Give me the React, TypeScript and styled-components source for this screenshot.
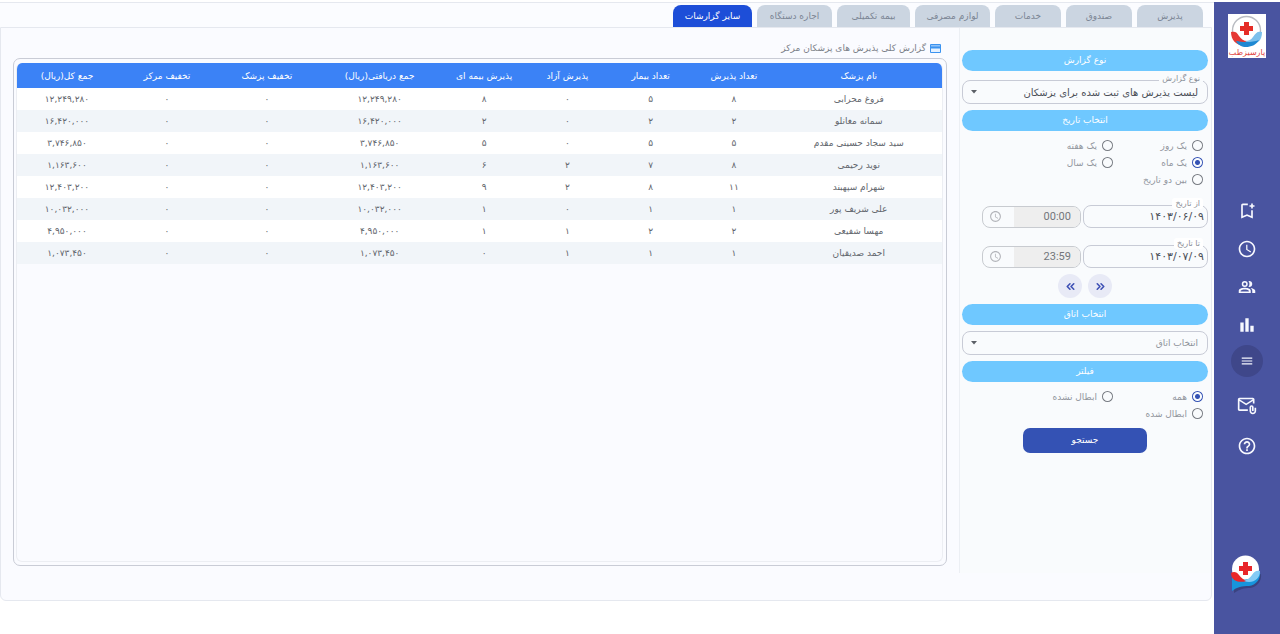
import React, { useState } from "react";
import styled, { createGlobalStyle, css } from "styled-components";
import {
  MdOutlineBookmarkAdd,
  MdAccessTime,
  MdBarChart,
  MdMenu,
  MdOutlineAttachEmail,
  MdHelpOutline,
} from "react-icons/md";
import { ChevronsLeft, ChevronsRight } from "lucide-react";

const GlobalStyle = createGlobalStyle`
  * { box-sizing: border-box; }
  body {
    margin: 0;
    background: #ffffff;
    font-family: "DejaVu Sans", "Liberation Sans", sans-serif;
    font-size: 9px;
    color: #6b7280;
  }
  button, input, select { font: inherit; color: inherit; margin: 0; }
`;

const Page = styled.div`
  display: flex;
  min-height: 100vh;
  padding-top: 2px;
`;

const Sidebar = styled.aside`
  flex: 0 0 66px;
  display: flex;
  flex-direction: column;
  align-items: center;
  padding: 12px 0 40px;
  background: #4954a0;
`;

const Brand = styled.a`
  display: block;
  width: 38px;
  height: 44px;
  background: #ffffff;
`;

const Nav = styled.nav`
  display: flex;
  flex-direction: column;
  align-items: center;
  margin-top: 134px;
`;

const NavButton = styled.button<{ $size?: number }>`
  display: flex;
  align-items: center;
  justify-content: center;
  width: 38px;
  height: ${(p) => p.$size ?? 38}px;
  padding: 0;
  border: 0;
  background: none;
  color: #f8f9ff;
`;

const MenuButton = styled(NavButton)`
  width: 32px;
  height: 32px;
  margin: 1px 0 9px;
  border-radius: 50%;
  background: #3f478a;
`;

const ChatButton = styled(NavButton)`
  margin-top: auto;
`;

const Main = styled.main`
  flex: 1;
  min-width: 0;
  padding-right: 2px;
  border-top: 1px solid #e5e8ef;
  background: #ffffff;
`;

const TabBar = styled.div`
  display: flex;
  gap: 5px;
  padding: 2px 9px 0;
  background: #fbfcff;
`;

const Tab = styled.button<{ $width: number; $active?: boolean }>`
  width: ${(p) => p.$width}px;
  height: 22px;
  padding: 0;
  border: 0;
  border-radius: 8px 8px 0 0;
  background: ${(p) => (p.$active ? "#1d4ed8" : "#cbd5e1")};
  color: ${(p) => (p.$active ? "#ffffff" : "#7b8594")};
  white-space: nowrap;
`;

const Board = styled.div`
  display: flex;
  align-items: stretch;
  padding-bottom: 27px;
  border: 1px solid #e5e8ef;
  border-radius: 0 0 6px 6px;
  background: #fafbff;
`;

const Filters = styled.form`
  flex: 0 0 252px;
  display: flex;
  flex-direction: column;
  min-height: 545px;
  padding: 22px 3px 0 2px;
  border-left: 1px solid #eceff4;
  background: #f9fbfd;
`;

const Heading = styled.h2`
  margin: 0;
  height: 21px;
  border-radius: 11px;
  background: #6fc8ff;
  color: #ffffff;
  font-size: 9px;
  font-weight: 400;
  line-height: 20px;
  text-align: center;
`;

const Field = styled.div<{ $gap?: number; $grow?: boolean }>`
  position: relative;
  ${(p) => p.$grow && css`flex: 1; min-width: 0;`}
  margin: ${(p) => (p.$gap ? `${p.$gap}px 0 6px` : 0)};
`;

const FloatLabel = styled.label<{ $bg?: string }>`
  position: absolute;
  top: -7px;
  right: 5px;
  padding: 0 3px;
  border-radius: 3px;
  background: ${(p) => p.$bg ?? "#f9fbfd"};
  color: #8b8f98;
  font-size: 8px;
  line-height: 11px;
`;

const Select = styled.select<{ $muted?: boolean }>`
  display: block;
  width: 100%;
  height: 24px;
  padding: 0 9px;
  appearance: none;
  border: 1px solid #c8cbd6;
  border-radius: 8px;
  background: transparent;
  color: ${(p) => (p.$muted ? "#8f939b" : "#4b5058")};
  font-size: ${(p) => (p.$muted ? 9 : 10)}px;
`;

const Caret = styled.svg`
  position: absolute;
  left: 9px;
  top: 10px;
  width: 6px;
  height: 4px;
  pointer-events: none;
`;

const Choices = styled.div<{ $bottom: number }>`
  display: grid;
  grid-template-columns: 90px 90px;
  grid-auto-rows: 17px;
  margin: 6px 5px ${(p) => p.$bottom}px;
`;

const Choice = styled.label`
  display: flex;
  align-items: center;
  gap: 5px;
  color: #92969d;
  white-space: nowrap;
`;

const Radio = styled.input`
  flex: none;
  width: 11px;
  height: 11px;
  appearance: none;
  border-radius: 50%;
  background: radial-gradient(circle, transparent 4px, #777b82 5px);
  &:checked {
    background: radial-gradient(circle, #3452b4 2px, transparent 3px, transparent 4px, #3452b4 5px);
  }
`;

const DateRow = styled.div`
  display: flex;
  align-items: center;
  gap: 2px;
  height: 23px;
  margin-bottom: 17px;
  padding-left: 20px;
`;

const DateInput = styled.input`
  display: block;
  width: 100%;
  height: 23px;
  padding: 0 3px;
  border: 1px solid #c8cbd6;
  border-radius: 8px;
  background: transparent;
  color: #4b5058;
  font-size: 11px;
`;

const TimeBox = styled.div`
  flex: 0 0 99px;
  display: flex;
  height: 22px;
  overflow: hidden;
  border: 1px solid #c8cbd0;
  border-radius: 8px;
`;

const TimeInput = styled.input`
  flex: 1;
  min-width: 0;
  padding: 0 9px;
  border: 0;
  background: #eeeeee;
  color: #73767b;
  font-family: Roboto, sans-serif;
  font-size: 11px;
`;

const TimeIcon = styled.span`
  flex: 0 0 31px;
  display: flex;
  align-items: center;
  justify-content: center;
  padding-left: 0;
  padding-right: 6px;
  color: #b3b5ba;
`;

const Pager = styled.div`
  display: flex;
  justify-content: center;
  gap: 6px;
  margin: -11px 0 6px;
`;

const RoundButton = styled.button`
  display: flex;
  align-items: center;
  justify-content: center;
  width: 24px;
  height: 24px;
  padding: 0;
  border: 0;
  border-radius: 50%;
  background: #e8eaf6;
  color: #3f51b5;
`;

const SearchButton = styled.button`
  align-self: center;
  width: 124px;
  height: 25px;
  padding: 0 0 2px;
  border: 0;
  border-radius: 7px;
  background: #3452b4;
  color: #ffffff;
`;

const Report = styled.section`
  flex: 1;
  min-width: 0;
  display: flex;
  flex-direction: column;
  padding: 11px 12px 7px;
`;

const ReportTitle = styled.h1`
  display: flex;
  align-items: center;
  gap: 4px;
  height: 18px;
  margin: 0;
  padding-right: 6px;
  color: #7b7f88;
  font-size: 9px;
  font-weight: 400;
`;

const Frame = styled.div`
  flex: 1;
  margin-top: 1px;
  padding: 4px 3px 3px 2px;
  border: 1px solid #c9ccd6;
  border-radius: 7px;
`;

const FrameInner = styled.div`
  height: 100%;
  overflow: hidden;
  border: 1px solid #eceef3;
  border-top: 0;
  border-radius: 6px;
`;

const Table = styled.table`
  width: 100%;
  table-layout: fixed;
  border-collapse: collapse;
  text-align: center;
`;

const Col = styled.col<{ $share: number }>`
  width: ${(p) => p.$share}%;
`;

const HeadCell = styled.th`
  height: 25px;
  padding: 0;
  background: #3b82f6;
  color: #ffffff;
  font-weight: 400;
  white-space: nowrap;
`;

const Row = styled.tr`
  background: #ffffff;
  &:nth-child(even) { background: #f1f5f9; }
`;

const Cell = styled.td`
  height: 22px;
  padding: 0;
  color: #62666d;
  white-space: nowrap;
`;

const BrandMark = () => (
  <svg width="38" height="44" viewBox="0 0 38 44" role="img" aria-label="پارسیزطب">
    <circle cx="18.500" cy="16.500" r="14" fill="#fff" stroke="#b9bcc2" strokeWidth="1.400" />
    <path d="M3 18c4-1 6 0 8 4 2 3 5 5 8 5l-3 5C8 31 3 26 3 18z" fill="#e53935" />
    <path d="M34 18c-5-1-6 1-9 5-2 3-5 4-8 4 4 3 9 3 13 1 3-2 4-6 4-10z" fill="#7cc0ec" />
    <path d="M8 27c6 1 15 2 23-1-3 5-8 7-13 7-4 0-8-2-10-6z" fill="#1e88d2" />
    <path d="M16 8h5v4h4v5h-4v4h-5v-4h-4v-5h4z" fill="#e52d27" />
    <text x="19" y="41" textAnchor="middle" fontSize="8" fill="#e0443f">پارسیزطب</text>
  </svg>
);

const ChatMark = () => (
  <svg width="38" height="40" viewBox="0 0 38 40" aria-hidden="true">
    <path d="M6 39V24l27-4c1 7-4 13-11 14-6 0-10 1-16 5z" fill="#2b3160" opacity="0.500" />
    <circle cx="17.500" cy="15" r="13.500" fill="#fff" />
    <path d="M4 37V22c7 5 18 6 28-4 1 7-4 13-11 14-7 0-12 1-17 5z" fill="#1795dc" />
    <path d="M3 19c3-2 6-1 8 2s5 5 8 6c-6 2-16 1-16-8z" fill="#e8262a" />
    <path d="M32 17c-4-1-6 1-8 4s-5 5-8 6c8 3 16-1 16-10z" fill="#84cbf5" />
    <path d="M15 8h5v4h4v5h-4v4h-5v-4h-4v-5h4z" fill="#e8262a" />
  </svg>
);

const PeopleIcon = () => (
  <svg width="18" height="18" viewBox="0 0 24 24" fill="currentColor" aria-hidden="true">
    <path
      fillRule="evenodd"
      d="M9 4a4 4 0 1 1 0 8 4 4 0 0 1 0-8zm0 2a2 2 0 1 0 0 4 2 2 0 0 0 0-4z"
    />
    <path d="M14 4c2.800-.5 5 1.300 5 4s-2.200 4.500-5 4c1.700-2.200 1.700-5.800 0-8z" />
    <path
      fillRule="evenodd"
      d="M1 20v-3c0-3 5-4 8-4s8 1 8 4v3zm2.500-2h11v-1c-1-1.200-3.500-1.700-5.500-1.700s-4.500.5-5.500 1.700z"
    />
    <path d="M16.500 13.200c3 .4 6.500 1.500 6.500 3.800v3h-4v-3c0-1.600-1-2.800-2.500-3.800z" />
  </svg>
);

const CardIcon = () => (
  <svg width="11" height="9" viewBox="0 0 11 9" aria-hidden="true">
    <rect width="11" height="9" rx="1" fill="#3b93f0" />
    <path d="M1 1.400h9v.8H1zM1 4.600h9V8H1z" fill="#e4f1ff" />
  </svg>
);

const Arrow = () => (
  <Caret viewBox="0 0 6 4" aria-hidden="true">
    <path d="M0 0h6L3 3.500z" fill="#5b5f66" />
  </Caret>
);

const tabs = [
  { label: "پذیرش", width: 66 },
  { label: "صندوق", width: 66 },
  { label: "خدمات", width: 66 },
  { label: "لوازم مصرفی", width: 75 },
  { label: "بیمه تکمیلی", width: 73 },
  { label: "اجاره دستگاه", width: 75 },
  { label: "سایر گزارشات", width: 79 },
];

const columns = [
  { label: "نام پزشک", share: 18 },
  { label: "تعداد پذیرش", share: 9 },
  { label: "تعداد بیمار", share: 9 },
  { label: "پذیرش آزاد", share: 9 },
  { label: "پذیرش بیمه ای", share: 9 },
  { label: "جمع دریافتی(ریال)", share: 13.6 },
  { label: "تخفیف پزشک", share: 10.8 },
  { label: "تخفیف مرکز", share: 10.8 },
  { label: "جمع کل(ریال)", share: 10.8 },
];

const rows = [
  ["فروغ محرابی", "۸", "۵", "۰", "۸", "۱۲,۲۴۹,۲۸۰", "۰", "۰", "۱۲,۲۴۹,۲۸۰"],
  ["سمانه مغانلو", "۲", "۲", "۰", "۲", "۱۶,۴۲۰,۰۰۰", "۰", "۰", "۱۶,۴۲۰,۰۰۰"],
  ["سید سجاد حسینی مقدم", "۵", "۵", "۰", "۵", "۳,۷۴۶,۸۵۰", "۰", "۰", "۳,۷۴۶,۸۵۰"],
  ["نوید رحیمی", "۸", "۷", "۲", "۶", "۱,۱۶۳,۶۰۰", "۰", "۰", "۱,۱۶۳,۶۰۰"],
  ["شهرام سپهبند", "۱۱", "۸", "۲", "۹", "۱۲,۴۰۳,۲۰۰", "۰", "۰", "۱۲,۴۰۳,۲۰۰"],
  ["علی شریف پور", "۱", "۱", "۰", "۱", "۱۰,۰۳۲,۰۰۰", "۰", "۰", "۱۰,۰۳۲,۰۰۰"],
  ["مهسا شفیعی", "۲", "۲", "۱", "۱", "۴,۹۵۰,۰۰۰", "۰", "۰", "۴,۹۵۰,۰۰۰"],
  ["احمد صدیقیان", "۱", "۱", "۱", "۰", "۱,۰۷۳,۴۵۰", "۰", "۰", "۱,۰۷۳,۴۵۰"],
];

function RadioGroup({ name, options, initial, bottom }: { name: string; options: string[]; initial: string; bottom: number }) {
  const [value, setValue] = useState(initial);
  return (
    <Choices role="radiogroup" $bottom={bottom}>
      {options.map((option) => (
        <Choice key={option}>
          <Radio type="radio" name={name} checked={value === option} onChange={() => setValue(option)} />
          {option}
        </Choice>
      ))}
    </Choices>
  );
}

function DateField({ id, label, date, time }: { id: string; label: string; date: string; time: string }) {
  return (
    <DateRow>
      <Field $grow>
        <DateInput id={id} defaultValue={date} />
        <FloatLabel htmlFor={id} $bg="#ffffff">{label}</FloatLabel>
      </Field>
      <TimeBox>
        <TimeInput aria-label={`ساعت ${label}`} defaultValue={time} disabled />
        <TimeIcon><MdAccessTime size={13} /></TimeIcon>
      </TimeBox>
    </DateRow>
  );
}

export default function App() {
  return (
    <>
      <GlobalStyle />
      <Page dir="rtl" lang="fa">
        <Sidebar>
          <Brand href="#"><BrandMark /></Brand>
          <Nav>
            <NavButton aria-label="نشان‌ها"><MdOutlineBookmarkAdd size={20} /></NavButton>
            <NavButton aria-label="زمان"><MdAccessTime size={20} /></NavButton>
            <NavButton aria-label="کاربران"><PeopleIcon /></NavButton>
            <NavButton aria-label="گزارشات"><MdBarChart size={20} /></NavButton>
            <MenuButton aria-label="منو"><MdMenu size={14} /></MenuButton>
            <NavButton aria-label="پیام" $size={40}><MdOutlineAttachEmail size={20} /></NavButton>
            <NavButton aria-label="راهنما" $size={40}><MdHelpOutline size={20} /></NavButton>
          </Nav>
          <ChatButton aria-label="گفتگو" $size={40}><ChatMark /></ChatButton>
        </Sidebar>
        <Main>
          <TabBar role="tablist">
            {tabs.map((tab, i) => (
              <Tab key={tab.label} role="tab" aria-selected={i === 6} $active={i === 6} $width={tab.width}>
                {tab.label}
              </Tab>
            ))}
          </TabBar>
          <Board>
            <Filters onSubmit={(e) => e.preventDefault()}>
              <Heading>نوع گزارش</Heading>
              <Field $gap={9}>
                <Select id="report-type">
                  <option>لیست پذیرش های ثبت شده برای پزشکان</option>
                </Select>
                <FloatLabel htmlFor="report-type">نوع گزارش</FloatLabel>
                <Arrow />
              </Field>
              <Heading>انتخاب تاریخ</Heading>
              <RadioGroup
                name="period"
                options={["یک روز", "یک هفته", "یک ماه", "یک سال", "بین دو تاریخ"]}
                initial="یک ماه"
                bottom={17}
              />
              <DateField id="from" label="از تاریخ" date="۱۴۰۳/۰۶/۰۹" time="00:00" />
              <DateField id="to" label="تا تاریخ" date="۱۴۰۳/۰۷/۰۹" time="23:59" />
              <Pager>
                <RoundButton type="button" aria-label="بعدی"><ChevronsRight size={13} strokeWidth={3} /></RoundButton>
                <RoundButton type="button" aria-label="قبلی"><ChevronsLeft size={13} strokeWidth={3} /></RoundButton>
              </Pager>
              <Heading>انتخاب اتاق</Heading>
              <Field $gap={6}>
                <Select $muted aria-label="انتخاب اتاق">
                  <option>انتخاب اتاق</option>
                </Select>
                <Arrow />
              </Field>
              <Heading>فیلتر</Heading>
              <RadioGroup name="state" options={["همه", "ابطال نشده", "ابطال شده"]} initial="همه" bottom={6} />
              <SearchButton type="submit">جستجو</SearchButton>
            </Filters>
            <Report>
              <ReportTitle><CardIcon />گزارش کلی پذیرش های پزشکان مرکز</ReportTitle>
              <Frame>
                <FrameInner>
                  <Table>
                    <colgroup>
                      {columns.map((c) => <Col key={c.label} $share={c.share} />)}
                    </colgroup>
                    <thead>
                      <tr>{columns.map((c) => <HeadCell key={c.label} scope="col">{c.label}</HeadCell>)}</tr>
                    </thead>
                    <tbody>
                      {rows.map((row) => (
                        <Row key={row[0]}>
                          {row.map((value, i) => <Cell key={i}>{value}</Cell>)}
                        </Row>
                      ))}
                    </tbody>
                  </Table>
                </FrameInner>
              </Frame>
            </Report>
          </Board>
        </Main>
      </Page>
    </>
  );
}
